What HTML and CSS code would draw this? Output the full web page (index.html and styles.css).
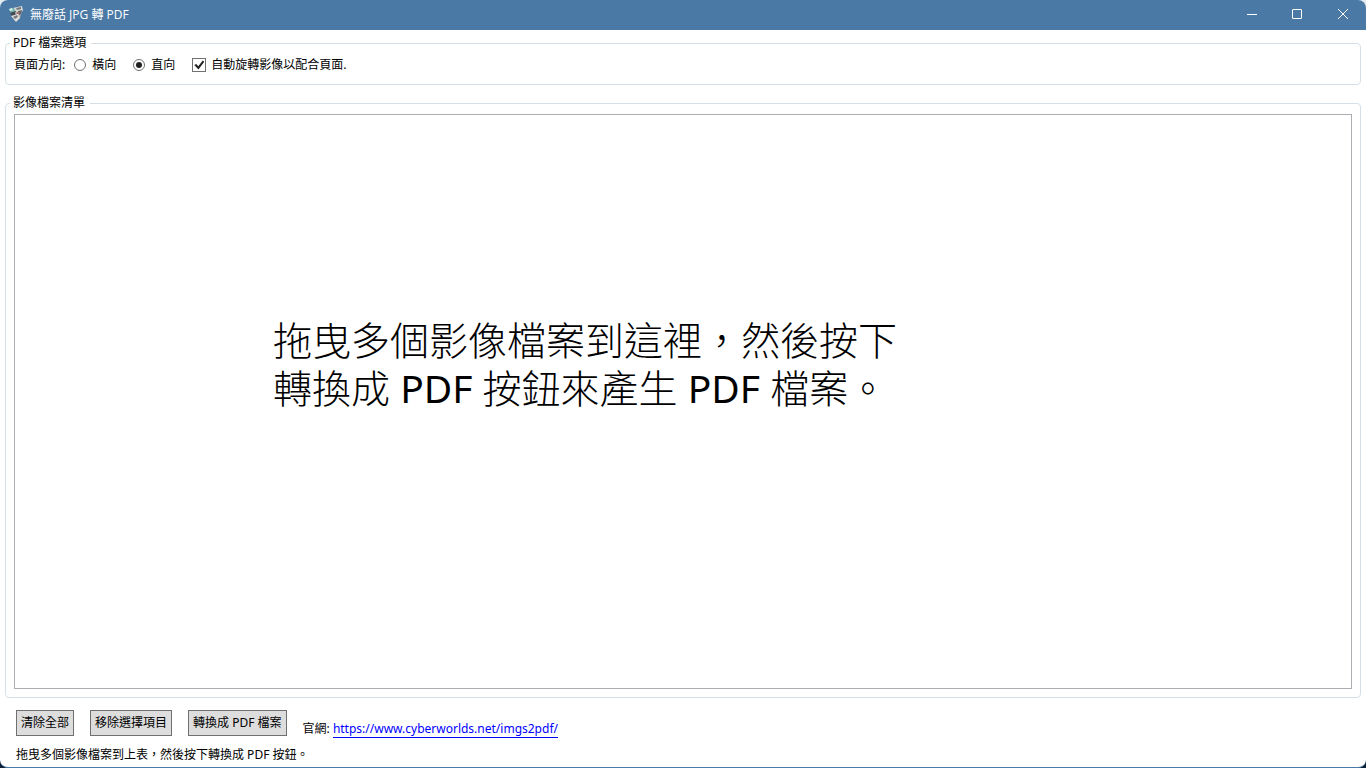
FILE: index.html
```html
<!DOCTYPE html>
<html lang="zh-Hant">
<head>
<meta charset="utf-8">
<title>無廢話 JPG 轉 PDF</title>
<link rel="stylesheet" href="styles.css">
</head>
<body>
<div class="window">
  <header class="titlebar">
    <svg class="app-icon" width="16" height="16" viewBox="0 0 16 16" aria-hidden="true">
      <path d="M5 2L14 0L15 5L7 7Z" fill="#d9dad8"/>
      <path d="M8 2L13 1L13 3L9 4Z" fill="#77787a"/>
      <path d="M1 3L6 2L8 6L3 7Z" fill="#73b5ae"/>
      <path d="M1 3L4 2L5 4L2 5Z" fill="#d5eee7"/>
      <path d="M2 7L8 5L9 9L4 10Z" fill="#434b4e"/>
      <path d="M7 6L14 5L12 12L8 12Z" fill="#a9adb0"/>
      <path d="M10 5L14 4L13 8L11 9Z" fill="#66696c"/>
      <path d="M3 10L10 8L12 12L8 16Z" fill="#e2dfda"/>
      <path d="M5 11L9 9L10 11L7 13Z" fill="#77797d"/>
      <path d="M9 6L11 6L11 8L9 8Z" fill="#b56f60"/>
    </svg>
    <h1 class="title">無廢話 JPG 轉 PDF</h1>
    <div class="caption-buttons">
      <button class="caption-button" type="button" aria-label="最小化">
        <svg width="12" height="12" viewBox="0 0 12 12"><path d="M2 5.5H12" /></svg>
      </button>
      <button class="caption-button" type="button" aria-label="最大化">
        <svg width="12" height="12" viewBox="0 0 12 12"><rect x="1.5" y="0.5" width="9" height="9" rx="0.5"/></svg>
      </button>
      <button class="caption-button" type="button" aria-label="關閉">
        <svg width="12" height="12" viewBox="0 0 12 12"><path d="M1 0L11 10M11 0L1 10"/></svg>
      </button>
    </div>
  </header>

  <main class="content">
    <fieldset class="group">
      <legend class="legend">PDF 檔案選項</legend>
      <div class="options">
        <span class="options-label">頁面方向:</span>
        <label class="option"><input class="radio" type="radio" name="orientation">橫向</label>
        <label class="option"><input class="radio" type="radio" name="orientation" checked>直向</label>
        <label class="option"><input class="check" type="checkbox" checked>自動旋轉影像以配合頁面.</label>
      </div>
    </fieldset>

    <fieldset class="group group-files">
      <legend class="legend">影像檔案清單</legend>
      <div class="file-list">
        <p class="hint">拖曳多個影像檔案到這裡，然後按下<br>轉換成 <span class="latin">PDF</span> 按鈕來產生 <span class="latin">PDF</span> 檔案。</p>
      </div>
    </fieldset>

    <div class="actions">
      <button class="button" type="button">清除全部</button>
      <button class="button" type="button">移除選擇項目</button>
      <button class="button" type="button">轉換成 PDF 檔案</button>
      <p class="site">官網: <a class="link" href="https://www.cyberworlds.net/imgs2pdf/">https://www.cyberworlds.net/imgs2pdf/</a></p>
    </div>
    <p class="status">拖曳多個影像檔案到上表，然後按下轉換成 PDF 按鈕。</p>
  </main>
</div>
</body>
</html>
```
FILE: styles.css
```css
* {
  box-sizing: border-box;
}

body {
  margin: 0;
  background: linear-gradient(#e4eaf0 50%, #0d2238 50%);
  color: #000;
  font: 12px/16px "Noto Sans", "Noto Sans CJK TC", sans-serif;
}

.window {
  display: flex;
  flex-direction: column;
  height: 100vh;
  overflow: hidden;
  border-bottom: 1px solid #4a79a5;
  border-radius: 8px;
  background: #fff;
}

.titlebar {
  display: flex;
  align-items: center;
  height: 30px;
  padding-left: 8px;
  background: #4a79a5;
  color: #fff;
}

.app-icon {
  margin-bottom: 2px;
}

.title {
  flex: 1;
  margin: 0 0 0 6px;
  font-family: "Open Sans", "Noto Sans CJK TC", sans-serif;
  font-size: 12px;
  font-weight: 400;
}

.caption-buttons {
  display: flex;
}

.caption-button {
  display: flex;
  align-items: center;
  justify-content: center;
  width: 46px;
  height: 28px;
  padding: 0;
  border: 0;
  background: none;
}

.caption-button svg {
  fill: none;
  stroke: #fff;
}

.content {
  display: flex;
  flex: 1;
  flex-direction: column;
  min-height: 0;
  padding: 5px 5px 4px;
}

.group {
  min-width: 0;
  margin: 0 0 10px;
  padding: 0 8px 11px;
  border: 1px solid #d5dfe5;
  border-radius: 4px;
}

.group-files {
  display: flex;
  flex: 1;
  min-height: 0;
  padding-top: 3px;
  padding-bottom: 8px;
}

.legend {
  margin-left: -4px;
  padding: 0 5px 0 3px;
}

.options {
  display: flex;
  align-items: center;
  padding-top: 6px;
}

.option {
  display: flex;
  align-items: center;
  margin-right: 17px;
}

.options-label {
  margin-right: 9px;
}

.radio,
.check {
  display: grid;
  place-items: center;
  margin: 0 5px 0 0;
  border: 1px solid #707070;
  background: #fff;
  appearance: none;
}

.radio {
  width: 12px;
  height: 12px;
  margin-right: 6px;
  border-radius: 50%;
}

.radio:checked::before {
  width: 6px;
  height: 6px;
  border-radius: 50%;
  background: #212121;
  content: "";
}

.check {
  width: 14px;
  height: 14px;
}

.check:checked::before {
  width: 10px;
  height: 10px;
  background: #212121;
  clip-path: polygon(0 50%, 20% 40%, 40% 62%, 85% 5%, 100% 18%, 42% 95%);
  content: "";
}

.file-list {
  flex: 1;
  padding: 201px 20px 0 258px;
  border: 1px solid #abadb3;
  background: #fff;
}

.hint {
  margin: 0;
  font-size: 39px;
  font-weight: 300;
  line-height: 48px;
}

.latin {
  font-weight: 400;
}

.actions {
  display: flex;
  align-items: flex-start;
  gap: 16px;
  padding: 2px 11px 0;
}

.button {
  height: 26px;
  padding: 0 4px;
  border: 1px solid #707070;
  background: #ddd;
  color: #000;
  font: inherit;
}

.site {
  margin: 11px 0 0;
}

.link {
  border-bottom: 1px solid #00f;
  color: #00f;
  text-decoration: none;
}

.status {
  margin: 10px 11px 0;
}
```
